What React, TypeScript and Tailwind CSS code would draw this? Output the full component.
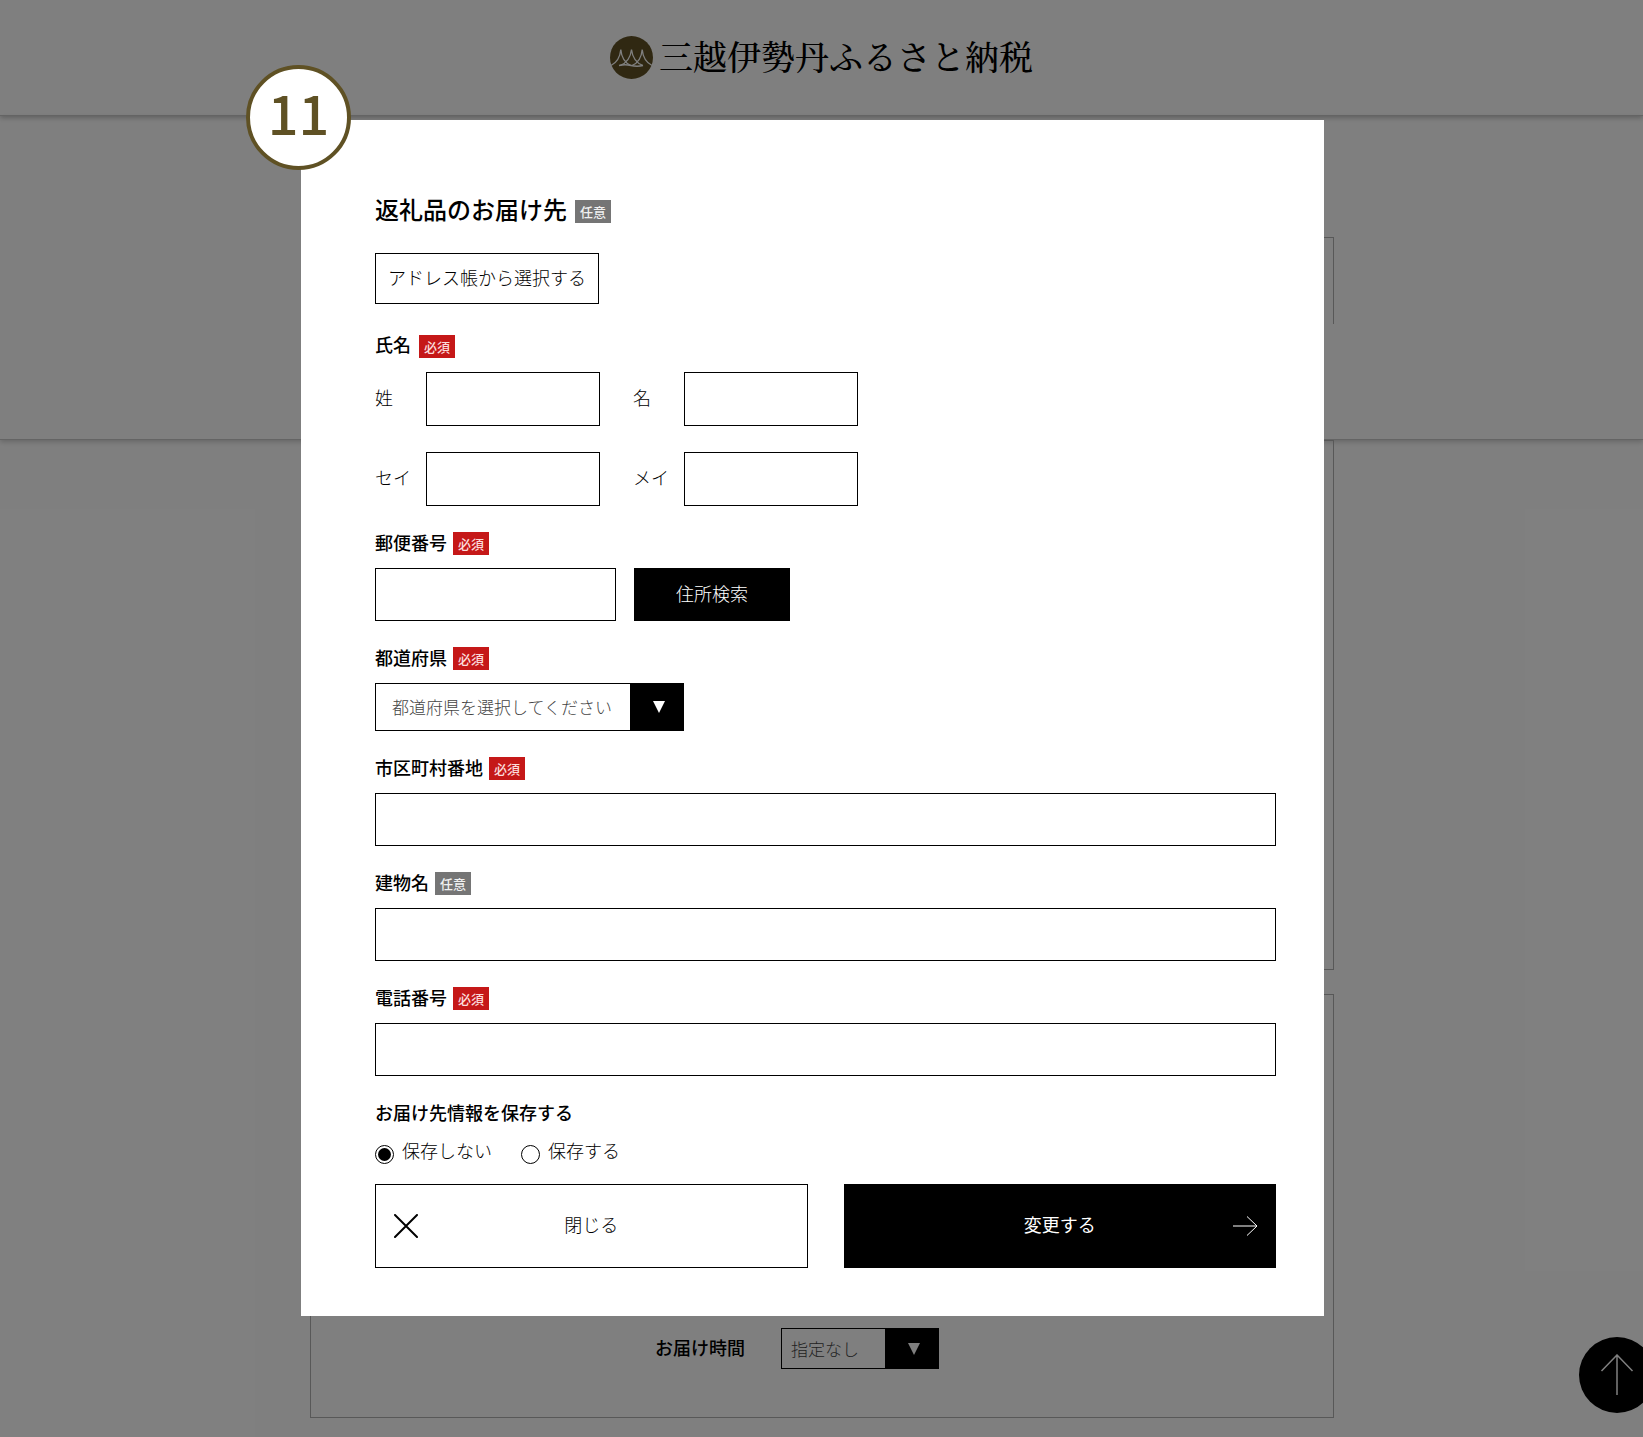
import { useState } from "react";

type BadgeProps = { required?: boolean };

function Badge({ required = false }: BadgeProps) {
  return (
    <span
      className={`flex h-[23px] w-9 items-center justify-center text-[13px] font-medium leading-none ${
        required ? "bg-[#c51818] text-[#fbdcdc]" : "bg-[#757575] text-[#f0f0f0]"
      }`}
    >
      {required ? "必須" : "任意"}
    </span>
  );
}

function FieldLabel({ text, htmlFor, required = false }: { text: string; htmlFor: string; required?: boolean }) {
  return (
    <label htmlFor={htmlFor} className="mb-[13px] flex h-[23px] items-center gap-1.5 text-lg font-medium leading-none">
      <span className="pb-1">{text}</span>
      <Badge required={required} />
    </label>
  );
}

function NameField({ id, text }: { id: string; text: string }) {
  return (
    <div className="flex items-center">
      <label htmlFor={id} className="w-[51px] pb-1 text-lg font-light">
        {text}
      </label>
      <input id={id} type="text" className="h-[54px] w-[174px] border border-black bg-white px-3 text-lg" />
    </div>
  );
}

function WideField({ id, text, required }: { id: string; text: string; required?: boolean }) {
  return (
    <div>
      <FieldLabel text={text} htmlFor={id} required={required} />
      <input id={id} type="text" className="block h-[53px] w-full border border-black bg-white px-4 text-lg" />
    </div>
  );
}

function SelectArrow() {
  return (
    <span className="pointer-events-none absolute inset-y-0 right-0 flex w-[54px] items-center justify-center bg-black pl-1">
      <svg width="12" height="12" viewBox="0 0 12 12" fill="#fff" aria-hidden="true">
        <path d="M0 0H12L6 12Z" />
      </svg>
    </span>
  );
}

function Logo() {
  return (
    <a href="#top" className="flex items-center gap-1.5">
      <svg width="43" height="43" viewBox="0 0 43 43" fill="none" aria-hidden="true">
        <circle cx="21.5" cy="21.5" r="21.5" fill="#605124" />
        <g stroke="#fff" strokeWidth="1.3">
          <path d="M1 29.500C6 27 10 22 10.800 13.500C11.500 22 15 27 21 29.500" />
          <path d="M10 29.500C17 27 20.500 22 21.500 13.500C22.500 22 26 27 33 29.500" />
          <path d="M22 29.500C28 27 31.500 22 32.200 13.500C33 22 37 27 42 29.500" />
          <path d="M9 29.500Q15 28 21 29.500T33 29.500" />
        </g>
      </svg>
      <span className="pt-1 font-['Liberation_Serif','Noto_Serif_CJK_JP','Noto_Sans_CJK_JP',serif] text-[34px] font-medium leading-none">
        三越伊勢丹ふるさと納税
      </span>
    </a>
  );
}

function OrderPage() {
  return (
    <div className="min-h-screen bg-white">
      <header className="relative flex h-[116px] items-center justify-center border-b border-[#c8c8c8] pb-px shadow-[0_2px_5px_rgba(0,0,0,0.25)]">
        <Logo />
      </header>
      <section className="h-[324px] border-b border-[#c8c8c8] pt-[121px] shadow-[0_2px_5px_rgba(0,0,0,0.2)]">
        <div className="mx-auto h-[87px] max-w-5xl border border-b-0 border-[#b0b0b0]" />
      </section>
      <main className="mx-auto max-w-5xl">
        <div className="h-[530px] border border-[#b0b0b0]" />
        <div className="mt-6 flex h-[424px] items-end justify-center border border-[#b0b0b0] pb-12">
          <div className="flex items-center gap-9 pr-[49px]">
            <label htmlFor="time" className="pb-1 text-lg font-medium">
              お届け時間
            </label>
            <div className="relative flex">
              <select
                id="time"
                className="h-[41px] w-[158px] appearance-none border border-black bg-white pl-[9px] text-[17px] font-light text-[#444]"
              >
                <option>指定なし</option>
              </select>
              <SelectArrow />
            </div>
          </div>
        </div>
      </main>
      <a
        href="#top"
        aria-label="ページの先頭へ"
        className="absolute top-[1337px] -right-3 flex size-19 items-center justify-center rounded-full bg-black"
      >
        <svg width="34" height="42" viewBox="0 0 34 42" fill="none" stroke="#fff" strokeWidth="1.500" aria-hidden="true">
          <path d="M17 41V1M1.500 17L17 1L32.500 17" />
        </svg>
      </a>
    </div>
  );
}

function AddressDialog() {
  const [save, setSave] = useState("no");

  return (
    <div
      role="dialog"
      aria-modal="true"
      aria-labelledby="dialog-title"
      className="relative w-full max-w-[1023px] bg-white pt-20 pr-12 pb-12 pl-[74px]"
    >
      <span className="absolute -top-[55px] -left-[55px] flex size-[105px] items-center justify-center rounded-full border-4 border-[#5f5124] bg-white pb-3 text-[54px] font-medium leading-none text-[#5f5124]">
        11
      </span>

      <div className="flex h-[23px] items-center gap-2">
        <h1 id="dialog-title" className="pb-1.5 text-2xl font-medium leading-none">
          返礼品のお届け先
        </h1>
        <Badge />
      </div>
      <button type="button" className="mt-[30px] h-[51px] border border-black bg-white px-3 pb-1 text-lg font-light">
        アドレス帳から選択する
      </button>

      <form className="mt-[30px] flex flex-col gap-[26px]" onSubmit={(e) => e.preventDefault()}>
        <fieldset>
          <legend className="mb-[14px] flex h-6 items-center gap-2 text-lg font-medium leading-none">
            <span className="pb-1">氏名</span>
            <Badge required />
          </legend>
          <div className="flex flex-wrap gap-x-[33px] gap-y-[26px]">
            <div className="flex flex-col gap-[26px]">
              <NameField id="sei" text="姓" />
              <NameField id="sei-kana" text="セイ" />
            </div>
            <div className="flex flex-col gap-[26px]">
              <NameField id="mei" text="名" />
              <NameField id="mei-kana" text="メイ" />
            </div>
          </div>
        </fieldset>

        <div>
          <FieldLabel text="郵便番号" htmlFor="zip" required />
          <div className="flex gap-[18px]">
            <input id="zip" type="text" className="h-[53px] w-[241px] border border-black bg-white px-4 text-lg" />
            <button type="button" className="h-[53px] w-[156px] bg-black pb-1 text-lg font-light text-white">
              住所検索
            </button>
          </div>
        </div>

        <div>
          <FieldLabel text="都道府県" htmlFor="pref" required />
          <div className="relative flex w-[309px]">
            <select
              id="pref"
              className="h-12 w-full appearance-none border border-black bg-white pl-4 text-[17px] font-light text-[#444]"
            >
              <option>都道府県を選択してください</option>
            </select>
            <SelectArrow />
          </div>
        </div>

        <WideField id="city" text="市区町村番地" required />
        <WideField id="building" text="建物名" />
        <WideField id="tel" text="電話番号" required />

        <fieldset>
          <legend className="flex h-[23px] items-center pb-1 text-lg font-medium leading-none">
            お届け先情報を保存する
          </legend>
          <div className="mt-3 flex gap-[29px]">
            {[
              { value: "no", text: "保存しない" },
              { value: "yes", text: "保存する" },
            ].map((item) => (
              <label key={item.value} className="flex h-[27px] items-end gap-2 text-lg font-light">
                <input
                  type="radio"
                  name="save"
                  value={item.value}
                  checked={save === item.value}
                  onChange={() => setSave(item.value)}
                  className="size-[19px] appearance-none rounded-full border border-black bg-white bg-clip-content p-0.5 checked:bg-black"
                />
                <span>{item.text}</span>
              </label>
            ))}
          </div>
          <div className="mt-5 grid grid-cols-2 gap-9">
            <button type="button" className="relative h-[84px] border border-black bg-white pb-1 text-lg font-light">
              <svg
                className="absolute top-1/2 left-[18px] -translate-y-1/2"
                width="24"
                height="24"
                viewBox="0 0 24 24"
                stroke="#000"
                strokeWidth="2"
                strokeLinecap="round"
                aria-hidden="true"
              >
                <path d="M1 1L23 23M23 1L1 23" />
              </svg>
              閉じる
            </button>
            <button type="submit" className="relative h-[84px] bg-black pb-1 text-lg font-normal text-white">
              変更する
              <svg
                className="absolute top-1/2 right-[18px] -translate-y-1/2"
                width="26"
                height="24"
                viewBox="0 0 26 24"
                fill="none"
                stroke="#fff"
                aria-hidden="true"
              >
                <path d="M1 12H25M15 2.500L25 12L15 21.500" />
              </svg>
            </button>
          </div>
        </fieldset>
      </form>
    </div>
  );
}

export default function App() {
  return (
    <div id="top" className="relative overflow-hidden font-['Noto_Sans_CJK_JP',sans-serif] text-black">
      <OrderPage />
      <div className="absolute inset-0 flex items-start justify-center bg-black/50 pt-[120px] pr-[18px]">
        <AddressDialog />
      </div>
    </div>
  );
}
